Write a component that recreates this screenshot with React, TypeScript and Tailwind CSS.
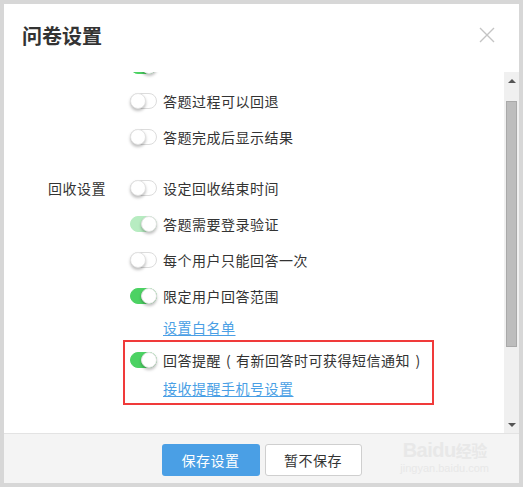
import type { ReactNode } from 'react'

const font = { fontFamily: '"Noto Sans CJK SC", "Noto Sans", sans-serif' }

type ToggleState = 'off' | 'on' | 'dim'

function Toggle({ state }: { state: ToggleState }) {
  const track =
    state === 'on'
      ? 'bg-[#4cd263] border-[#4cd263]'
      : state === 'dim'
        ? 'bg-[#b7ecc1] border-[#b7ecc1]'
        : 'bg-white border-[#dcdcdc]'
  return (
    <span className={`relative inline-flex h-[16px] w-[27px] shrink-0 items-center rounded-full border ${track}`}>
      <span
        className={`absolute top-[-1px] h-[16px] w-[16px] rounded-full border border-[#e2e2e2] bg-white shadow-[0_2px_3px_rgba(0,0,0,0.25)] ${
          state === 'off' ? 'left-[-1px]' : 'right-[-1px]'
        }`}
      />
    </span>
  )
}

function Row({ state, label, h = 'h-[36px]' }: { state: ToggleState; label: ReactNode; h?: string }) {
  return (
    <div className={`flex items-center gap-[6px] ${h}`}>
      <Toggle state={state} />
      <span className="whitespace-nowrap text-[14px] leading-none tracking-[0.5px] text-[#333]">{label}</span>
    </div>
  )
}

function Link({ text, h }: { text: string; h: string }) {
  return (
    <div className={`flex items-center pl-[33px] ${h}`}>
      <span className="text-[14px] leading-none tracking-[0.5px] text-[#4a9fe5] underline underline-offset-2">{text}</span>
    </div>
  )
}

function Scrollbar() {
  return (
    <div className="flex w-[15px] shrink-0 flex-col bg-[#f0f0f0]">
      <div className="mt-[1px] flex h-[16px] items-center justify-center">
        <span className="h-0 w-0 border-x-[4px] border-b-[4px] border-x-transparent border-b-[#555]" />
      </div>
      <div className="mx-[2px] mt-[12px] h-[246px] border border-[#a9a9a9] bg-[#bdbdbd]" />
      <div className="flex-1" />
      <div className="flex h-[16px] items-center justify-center">
        <span className="h-0 w-0 border-x-[4px] border-t-[4px] border-x-transparent border-t-[#555]" />
      </div>
    </div>
  )
}

export default function App() {
  return (
    <div className="h-[487px] w-[523px] bg-[#d7d7d7] p-[4px]" style={font}>
      <div className="flex h-[479px] w-[515px] flex-col bg-white">
        {/* header */}
        <div className="flex h-[68px] shrink-0 items-start justify-between pl-[18px] pr-[24px] pt-[21px]">
          <h1 className="text-[20px] font-bold leading-[22px] text-[#333]">问卷设置</h1>
          <svg viewBox="0 0 16 16" className="mt-[2px] h-[16px] w-[16px]" fill="none" stroke="#c4c4c4" strokeWidth="1.4">
            <path d="M1 1l14 14M15 1L1 15" />
          </svg>
        </div>

        {/* scrolling body, already scrolled a little */}
        <div className="flex h-[361px] shrink-0 overflow-hidden">
          <div className="min-w-0 flex-1 overflow-hidden">
            <div className="mt-[-27px] flex">
              <div className="w-[126px] shrink-0" />
              <div className="flex flex-col">
                <div className="flex h-[38px] items-end pb-[9px]">
                  <Toggle state="on" />
                </div>
                <Row state="off" label="答题过程可以回退" />
                <Row state="off" label="答题完成后显示结果" />
              </div>
            </div>

            <div className="mt-[15px] flex">
              <div className="flex h-[36px] w-[126px] shrink-0 items-center justify-end pr-[24px]">
                <span className="text-[14px] leading-none tracking-[0.5px] text-[#333]">回收设置</span>
              </div>
              <div className="flex flex-col">
                <Row state="off" label="设定回收结束时间" />
                <Row state="dim" label="答题需要登录验证" />
                <Row state="off" label="每个用户只能回答一次" />
                <Row state="on" label="限定用户回答范围" />
                <Link text="设置白名单" h="h-[26px]" />
                <div className="ml-[-7px] w-[311px] border-2 border-[#f03a3a] pl-[5px] pt-[2px] pb-[3px]">
                  <Row
                    state="on"
                    h="h-[32px]"
                    label={
                      <>
                        回答提醒<span className="inline-block w-[15px] text-center">(</span>有新回答时可获得短信通知
                        <span className="inline-block w-[16px] text-center">)</span>
                      </>
                    }
                  />
                  <Link text="接收提醒手机号设置" h="h-[24px]" />
                </div>
              </div>
            </div>
          </div>
          <Scrollbar />
        </div>

        {/* footer */}
        <div className="relative flex flex-1 items-start justify-center gap-[5px] border-t border-[#e3e3e3] bg-[#f4f4f4] pt-[10px]">
          <button className="h-[32px] w-[98px] rounded-[3px] bg-[#4a9fe5] text-[14px] tracking-[0.5px] text-white">保存设置</button>
          <button className="h-[32px] w-[97px] rounded-[3px] border border-[#cfcfcf] bg-white text-[14px] tracking-[0.5px] text-[#333]">
            暂不保存
          </button>
          <div className="pointer-events-none absolute right-[30px] top-[6px] flex flex-col items-center leading-none text-[#e8e8e8]">
            <span className="text-[20px] font-bold tracking-tight" style={{ fontFamily: '"Liberation Sans", sans-serif' }}>
              Baidu<span style={font} className="text-[16px]">经验</span>
            </span>
            <span className="mt-[3px] text-[11px]" style={{ fontFamily: '"Liberation Sans", sans-serif' }}>
              jingyan.baidu.com
            </span>
          </div>
        </div>
      </div>
    </div>
  )
}
